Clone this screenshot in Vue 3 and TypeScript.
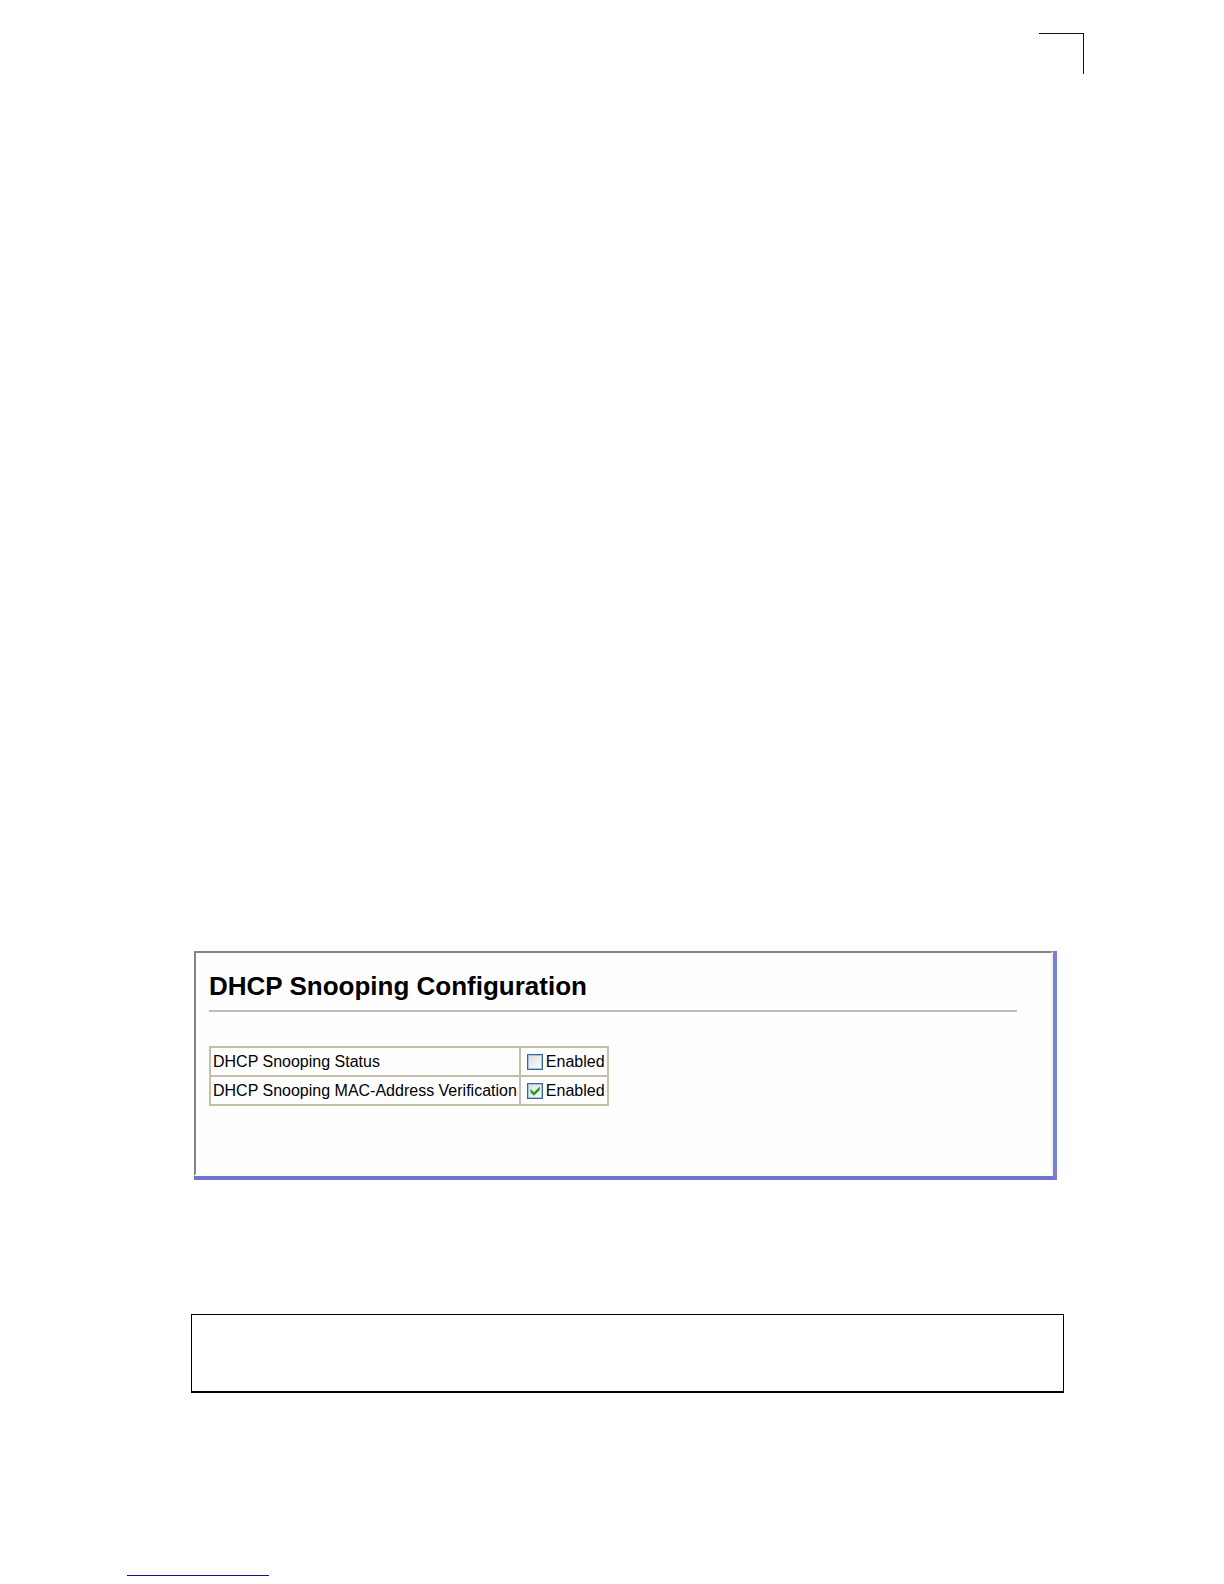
<script setup lang="ts">
import { ref } from 'vue'

interface Setting {
  id: string
  label: string
  enabled: boolean
}

const settings = ref<Setting[]>([
  { id: 'snooping-status', label: 'DHCP Snooping Status', enabled: false },
  { id: 'mac-verification', label: 'DHCP Snooping MAC-Address Verification', enabled: true },
])
</script>

<template>
  <div class="page">
    <header class="corner"></header>
    <main class="content">
      <section class="window">
        <div class="pane">
          <h1>DHCP Snooping Configuration</h1>
          <hr />
          <table>
            <tbody>
              <tr v-for="item in settings" :key="item.id">
                <td><label :for="item.id">{{ item.label }}</label></td>
                <td>
                  <label class="toggle">
                    <span class="box">
                      <input :id="item.id" v-model="item.enabled" type="checkbox" />
                      <svg v-if="item.enabled" viewBox="0 0 16 16" aria-hidden="true">
                        <path d="M3.5 6v3.6L7 12.8l5.8-5.9V3.4L7 9.2z" fill="#22a122" />
                      </svg>
                    </span>
                    <span>Enabled</span>
                  </label>
                </td>
              </tr>
            </tbody>
          </table>
        </div>
      </section>
      <div class="code-box"></div>
    </main>
    <footer class="footnote"></footer>
  </div>
</template>

<style>
body {
  background: #fff;
}
</style>

<style scoped>
.page {
  box-sizing: border-box;
  min-height: 100vh;
  padding: 33px 140px 8px 127px;
  display: flex;
  flex-direction: column;
  font-family: 'Liberation Sans', Arial, sans-serif;
  color: #000;
}
.corner {
  align-self: flex-end;
  width: 44px;
  height: 40px;
  border-top: 1px solid #111;
  border-right: 1px solid #111;
}
.content {
  margin: 877px 20px 0 64px;
}
.window {
  margin: 0 7px 0 3px;
  border-right: 4px solid #7680d4;
  border-bottom: 4px solid #6f76cc;
  background: #fff;
}
.pane {
  box-sizing: border-box;
  min-height: 225px;
  padding: 18px 34px 20px 13px;
  border: 2px solid #858585;
  border-right-color: #f1f0ea;
  border-bottom-color: #fbfbf8;
  background: #fefefe;
}
h1 {
  margin: 0;
  font-size: 26px;
  line-height: 30px;
}
hr {
  height: 2px;
  margin: 9px 0 34px;
  border: 0;
  background: #bfbcb4;
}
table {
  border-collapse: collapse;
  font-size: 16px;
  line-height: 20px;
}
td {
  height: 27px;
  padding: 0 2px;
  border: 2px solid #c3bfa9;
  white-space: nowrap;
}
.toggle {
  display: flex;
  align-items: center;
  gap: 3px;
  padding-left: 4px;
}
.box {
  position: relative;
  display: flex;
}
.box input {
  appearance: none;
  box-sizing: border-box;
  width: 16px;
  height: 16px;
  margin: 0;
  border: 1px solid #3468a2;
  background: linear-gradient(135deg, #dcdcd6, #fff);
  box-shadow: inset 0 0 0 1px #a9c0da;
}
.box svg {
  position: absolute;
  inset: 0;
  pointer-events: none;
}
.code-box {
  height: 76px;
  margin-top: 134px;
  border: 1px solid #000;
  border-bottom-width: 2px;
}
.footnote {
  width: 142px;
  margin-top: auto;
  border-top: 1px solid #1010a0;
}
</style>
